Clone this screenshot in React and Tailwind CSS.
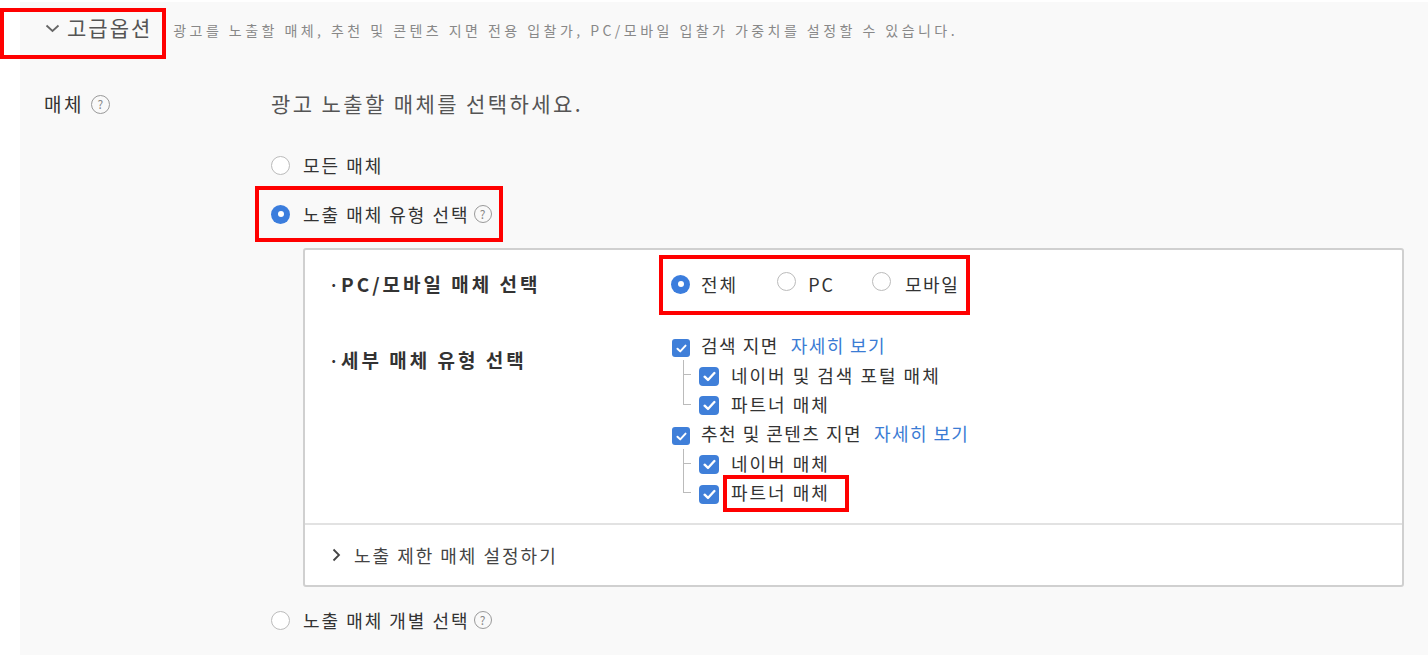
import React from "react";

const FONT = { fontFamily: '"Noto Sans CJK KR", "Noto Sans", sans-serif' };

function Help({ className = "" }) {
  return (
    <span
      className={
        "inline-flex items-center justify-center w-[18px] h-[18px] rounded-full border border-[#999] text-[12px] leading-none text-[#888] " +
        className
      }
    >
      ?
    </span>
  );
}

function Radio({ checked }) {
  return checked ? (
    <span className="inline-flex items-center justify-center w-[19px] h-[19px] rounded-full bg-[#3b7ddd] shrink-0">
      <span className="w-[6px] h-[6px] rounded-full bg-white" />
    </span>
  ) : (
    <span className="inline-block w-[19px] h-[19px] rounded-full border border-[#bbb] bg-white shrink-0" />
  );
}

function Check({ big }) {
  return (
    <span
      className={
        "inline-flex items-center justify-center bg-[#3f7fd9] shrink-0 " +
        (big ? "w-[20px] h-[19px] rounded-[4px]" : "w-[18px] h-[18px] rounded-[3px]")
      }
    >
      <svg width={big ? 13 : 11} height={big ? 11 : 9} viewBox="0 0 12 10" fill="none">
        <path d="M1.5 5.2 L4.6 8.2 L10.5 1.8" stroke="white" strokeWidth="2.2" strokeLinecap="round" strokeLinejoin="round" />
      </svg>
    </span>
  );
}

function Red({ className }) {
  return <span className={"absolute border-[4px] border-[#ff0000] pointer-events-none " + className} />;
}

function Child({ text, last, boxed }) {
  return (
    <div className="relative flex items-center h-[29.4px]">
      <span className={"absolute left-[12px] w-px bg-[#bbb] top-0 " + (last ? "h-[15px]" : "h-full")} />
      <span className="absolute left-[12px] top-[14px] w-[8px] h-px bg-[#bbb]" />
      <span className="ml-[28px]">
        <Check big />
      </span>
      <span className="relative ml-[12px] text-[18px] tracking-[2px] text-[#333]">
        {text}
        {boxed && <Red className="left-[-8px] right-[-19px] top-[-4px] bottom-[-6px]" />}
      </span>
    </div>
  );
}

function Parent({ text }) {
  return (
    <div className="flex items-center h-[29.4px]">
      <span className="ml-[1px]">
        <Check />
      </span>
      <span className="ml-[11px] text-[18px] tracking-[1.5px] text-[#333]">{text}</span>
      <span className="ml-[12px] text-[18px] tracking-[1.4px] text-[#3b7cd4]">자세히 보기</span>
    </div>
  );
}

function Label({ children }) {
  return (
    <div className="w-[342px] flex items-center text-[19px] font-bold text-[#333] tracking-[3px] leading-[28px]">
      <span className="w-[12px] text-[16px]">·</span>
      <span>{children}</span>
    </div>
  );
}

export default function App() {
  return (
    <div className="w-[1428px] h-[655px] bg-white pt-[2px] pl-[20px] overflow-hidden" style={FONT}>
      <div className="bg-[#f9f9f9] h-full">
        {/* header */}
        <div className="flex items-center h-[52px]">
          <div className="relative flex items-center pl-[25px] h-[30px]">
            <svg width="15" height="9" viewBox="0 0 15 9" fill="none">
              <path d="M1.5 1.5 L7.5 7 L13.5 1.5" stroke="#666" strokeWidth="1.8" />
            </svg>
            <span className="ml-[7px] text-[21px] text-[#555] tracking-[2px]">고급옵션</span>
            <Red className="left-[-20px] right-[-14px] top-[-5px] bottom-[-16px]" />
          </div>
          <span className="ml-[21px] mt-[4px] text-[14px] text-[#888] tracking-[3.45px]">
            광고를 노출할 매체, 추천 및 콘텐츠 지면 전용 입찰가, PC/모바일 입찰가 가중치를 설정할 수 있습니다.
          </span>
        </div>

        {/* media row */}
        <div className="flex mt-[36px]">
          <div className="w-[251px] pl-[24px] flex items-center h-[28px] self-start">
            <span className="text-[19px] text-[#333] tracking-[2.5px]">매체</span>
            <Help className="ml-[7px] w-[19px] h-[19px]" />
          </div>
          <div className="flex flex-col">
            <div className="h-[28px] flex items-center text-[21px] text-[#555] tracking-[2.4px]">
              광고 노출할 매체를 선택하세요.
            </div>
            <div className="mt-[34px] flex items-center h-[26px]">
              <Radio />
              <span className="ml-[13px] text-[18px] text-[#333] tracking-[2px]">모든 매체</span>
            </div>
            <div className="mt-[23px] flex items-center h-[26px] relative self-start">
              <Radio checked />
              <span className="ml-[13px] text-[18px] text-[#333] tracking-[2px]">노출 매체 유형 선택</span>
              <Help className="ml-[4px]" />
              <Red className="left-[-16px] right-[-11px] top-[-15px] bottom-[-15px]" />
            </div>

            {/* inner box */}
            <div className="mt-[21px] ml-[32px] w-[1101px] h-[339px] bg-white border-2 border-[#d0d0d0] rounded-[3px] flex flex-col">
              <div className="pt-[21px] pl-[24px] flex-1">
                <div className="flex items-center h-[26px]">
                  <Label>PC/모바일 매체 선택</Label>
                  <div className="relative flex items-center">
                    <Radio checked />
                    <span className="ml-[11px] text-[18px] text-[#333] tracking-[2px]">전체</span>
                    <span className="ml-[39px]">
                      <Radio />
                    </span>
                    <span className="ml-[12px] text-[18px] text-[#333] tracking-[2px]">PC</span>
                    <span className="ml-[37px]">
                      <Radio />
                    </span>
                    <span className="ml-[14px] text-[18px] text-[#333] tracking-[1.5px]">모바일</span>
                    <Red className="left-[-12px] right-[-11px] top-[-16px] bottom-[-17px]" />
                  </div>
                </div>
                <div className="flex mt-[34px]">
                  <div className="pt-[15px]">
                    <Label>세부 매체 유형 선택</Label>
                  </div>
                  <div className="flex flex-col">
                    <Parent text="검색 지면" />
                    <Child text="네이버 및 검색 포털 매체" />
                    <Child text="파트너 매체" last />
                    <Parent text="추천 및 콘텐츠 지면" />
                    <Child text="네이버 매체" />
                    <Child text="파트너 매체" last boxed />
                  </div>
                </div>
              </div>
              <div className="h-[62px] border-t-2 border-[#e2e2e2] flex items-center pl-[27px]">
                <svg width="9" height="14" viewBox="0 0 9 14" fill="none">
                  <path d="M1.5 1.5 L7 7 L1.5 12.5" stroke="#444" strokeWidth="1.8" />
                </svg>
                <span className="ml-[13px] text-[18px] text-[#444] tracking-[2px]">노출 제한 매체 설정하기</span>
              </div>
            </div>

            <div className="mt-[20px] flex items-center h-[26px]">
              <Radio />
              <span className="ml-[13px] text-[18px] text-[#333] tracking-[2px]">노출 매체 개별 선택</span>
              <Help className="ml-[4px]" />
            </div>
          </div>
        </div>
      </div>
    </div>
  );
}
